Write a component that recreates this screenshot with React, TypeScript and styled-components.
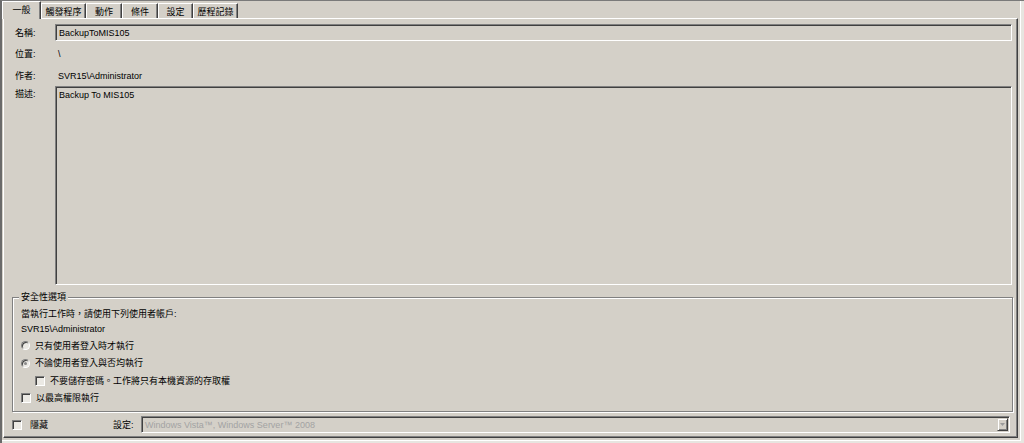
import React from "react";
import styled, { createGlobalStyle, css } from "styled-components";

const GlobalStyle = createGlobalStyle`
  html, body { margin: 0; padding: 0; width: 1024px; height: 443px; overflow: hidden; background: #d4d0c8; }
  body { font-family: "Liberation Sans", "Noto Sans CJK TC", sans-serif; font-size: 9px; color: #000; }
  * { box-sizing: border-box; }
`;

const sunken = css`
  border-top: 1px solid #808080;
  border-left: 1px solid #808080;
  border-right: 1px solid #ffffff;
  border-bottom: 1px solid #ffffff;
  box-shadow: inset 1px 1px 0 #404040, inset -1px -1px 0 #d4d0c8;
`;

const Root = styled.div`
  width: 1024px;
  height: 443px;
  background: #e7e5e0;
  border-left: 2px solid #6a6a6a;
  border-top: 1px solid #7a7a7a;
  padding: 0 3px 2px 0;
`;

const Frame = styled.div`
  height: 100%;
  background: #d4d0c8;
  border-right: 1px solid #ffffff;
  border-bottom: 1px solid #ffffff;
  padding: 0 2px 2px 1px;
  display: flex;
  flex-direction: column;
`;

const TabStrip = styled.div`
  height: 17px;
  flex: none;
  display: flex;
  align-items: flex-end;
  margin-left: -1px;
  position: relative;
  z-index: 1;
`;

const Tab = styled.div<{ $w: number; $active?: boolean }>`
  width: ${(p) => p.$w}px;
  height: ${(p) => (p.$active ? 18 : 15)}px;
  margin-bottom: ${(p) => (p.$active ? -1 : 0)}px;
  padding: ${(p) => (p.$active ? "0 0 2px" : "2px 0 0")};
  background: #d4d0c8;
  border-top: 1px solid #ffffff;
  border-left: 1px solid #ffffff;
  border-right: 1px solid #404040;
  box-shadow: inset -1px 0 0 #808080;
  display: flex;
  align-items: center;
  justify-content: center;
  line-height: 12px;
  white-space: nowrap;
`;

const Panel = styled.div`
  flex: 1;
  border-top: 1px solid #ffffff;
  border-left: 1px solid #ffffff;
  border-right: 1px solid #404040;
  border-bottom: 1px solid #404040;
  box-shadow: inset -1px -1px 0 #808080;
  padding: 0 4px 0 8px;
  display: flex;
  flex-direction: column;
`;

const FieldRow = styled.div<{ $mt: number; $h: number; $top?: boolean }>`
  display: flex;
  align-items: ${(p) => (p.$top ? "flex-start" : "center")};
  margin: ${(p) => p.$mt}px 1px 0 3px;
  height: ${(p) => p.$h}px;
  flex: none;
`;

const Label = styled.div<{ $mt?: number }>`
  width: 40px;
  flex: none;
  line-height: 12px;
  margin-top: ${(p) => p.$mt ?? 0}px;
  white-space: nowrap;
`;

const Value = styled.div`
  line-height: 12px;
  padding-left: 3px;
  white-space: nowrap;
`;

const TextBox = styled.div`
  ${sunken};
  flex: 1;
  height: 100%;
  padding: 0 3px;
  display: flex;
  align-items: center;
  line-height: 12px;
  white-space: nowrap;
`;

const TextArea = styled.div`
  ${sunken};
  flex: 1;
  height: 100%;
  padding: 2px 3px;
  line-height: 12px;
`;

const GroupBox = styled.div`
  margin-top: 12px;
  border: 1px solid #808080;
  box-shadow: inset 1px 1px 0 #ffffff, 1px 1px 0 #ffffff;
  padding: 0 8px 5px 8px;
  display: flex;
  flex-direction: column;
  flex: none;
`;

const Legend = styled.div`
  width: fit-content;
  margin: -7px 0 0 -2px;
  padding: 0 2px;
  background: #d4d0c8;
  line-height: 12px;
  height: 12px;
`;

const OptRow = styled.div<{ $mt?: number; $h: number; $indent?: number; $gap?: number }>`
  display: flex;
  align-items: center;
  height: ${(p) => p.$h}px;
  margin-top: ${(p) => p.$mt ?? 0}px;
  padding-left: ${(p) => p.$indent ?? 0}px;
  gap: ${(p) => p.$gap ?? 5}px;
  line-height: 12px;
  white-space: nowrap;
  flex: none;
`;

const Radio = styled.span<{ $checked?: boolean }>`
  width: 9px;
  height: 9px;
  flex: none;
  border-radius: 50%;
  background: #ebe9e4;
  border: 1px solid;
  border-color: #808080 #ffffff #ffffff #808080;
  box-shadow: inset 1px 1px 0 #404040;
  display: flex;
  align-items: center;
  justify-content: center;
  &::after {
    content: "";
    display: ${(p) => (p.$checked ? "block" : "none")};
    width: 3px;
    height: 3px;
    border-radius: 50%;
    background: #8a8a8a;
  }
`;

const Check = styled.span`
  width: 10px;
  height: 10px;
  flex: none;
  background: #ebe9e4;
  border: 1px solid;
  border-color: #808080 #ffffff #ffffff #808080;
  box-shadow: inset 1px 1px 0 #404040;
`;

const BottomRow = styled.div`
  display: flex;
  align-items: center;
  height: 17px;
  margin: 4px 3px 0 0;
  flex: none;
  line-height: 12px;
  white-space: nowrap;
`;

const HideOpt = styled.div`
  width: 101px;
  flex: none;
  display: flex;
  align-items: center;
  gap: 8px;
`;

const ConfigLabel = styled.div`
  width: 28px;
  flex: none;
`;

const Combo = styled.div`
  ${sunken};
  flex: 1;
  height: 100%;
  display: flex;
  align-items: center;
  padding: 0 1px 0 3px;
`;

const ComboText = styled.div`
  flex: 1;
  color: #a3a3a3;
  line-height: 12px;
`;

const DropButton = styled.div`
  width: 11px;
  height: 13px;
  flex: none;
  background: #d4d0c8;
  border-top: 1px solid #d4d0c8;
  border-left: 1px solid #d4d0c8;
  border-right: 1px solid #404040;
  border-bottom: 1px solid #404040;
  box-shadow: inset 1px 1px 0 #ffffff, inset -1px -1px 0 #808080;
  display: flex;
  align-items: center;
  justify-content: center;
`;

const tabs = [
  { t: "一般", w: 39, active: true },
  { t: "觸發程序", w: 45 },
  { t: "動作", w: 36 },
  { t: "條件", w: 36 },
  { t: "設定", w: 35 },
  { t: "歷程記錄", w: 45 },
];

export default function App() {
  return (
    <>
      <GlobalStyle />
      <Root>
        <Frame>
          <TabStrip>
            {tabs.map((tb) => (
              <Tab key={tb.t} $w={tb.w} $active={tb.active}>
                {tb.t}
              </Tab>
            ))}
          </TabStrip>
          <Panel>
            <FieldRow $mt={5} $h={17}>
              <Label>名稱:</Label>
              <TextBox>BackupToMIS105</TextBox>
            </FieldRow>
            <FieldRow $mt={4} $h={17}>
              <Label>位置:</Label>
              <Value>\</Value>
            </FieldRow>
            <FieldRow $mt={5} $h={17}>
              <Label>作者:</Label>
              <Value>SVR15\Administrator</Value>
            </FieldRow>
            <FieldRow $mt={2} $h={199} $top>
              <Label $mt={2}>描述:</Label>
              <TextArea>Backup To MIS105</TextArea>
            </FieldRow>
            <GroupBox>
              <Legend>安全性選項</Legend>
              <OptRow $mt={3} $h={15}>當執行工作時，請使用下列使用者帳戶:</OptRow>
              <OptRow $h={16}>SVR15\Administrator</OptRow>
              <OptRow $h={17}>
                <Radio />
                只有使用者登入時才執行
              </OptRow>
              <OptRow $h={18}>
                <Radio $checked />
                不論使用者登入與否均執行
              </OptRow>
              <OptRow $h={18} $indent={14}>
                <Check />
                不要儲存密碼。工作將只有本機資源的存取權
              </OptRow>
              <OptRow $h={16} $indent={-1} $gap={5}>
                <Check />
                以最高權限執行
              </OptRow>
            </GroupBox>
            <BottomRow>
              <HideOpt>
                <Check />
                隱藏
              </HideOpt>
              <ConfigLabel>設定:</ConfigLabel>
              <Combo>
                <ComboText>Windows Vista™, Windows Server™ 2008</ComboText>
                <DropButton>
                  <svg width="5" height="3" viewBox="0 0 5 3">
                    <path d="M0 0H5L2.5 3Z" fill="#9a9a9a" />
                  </svg>
                </DropButton>
              </Combo>
            </BottomRow>
          </Panel>
        </Frame>
      </Root>
    </>
  );
}
